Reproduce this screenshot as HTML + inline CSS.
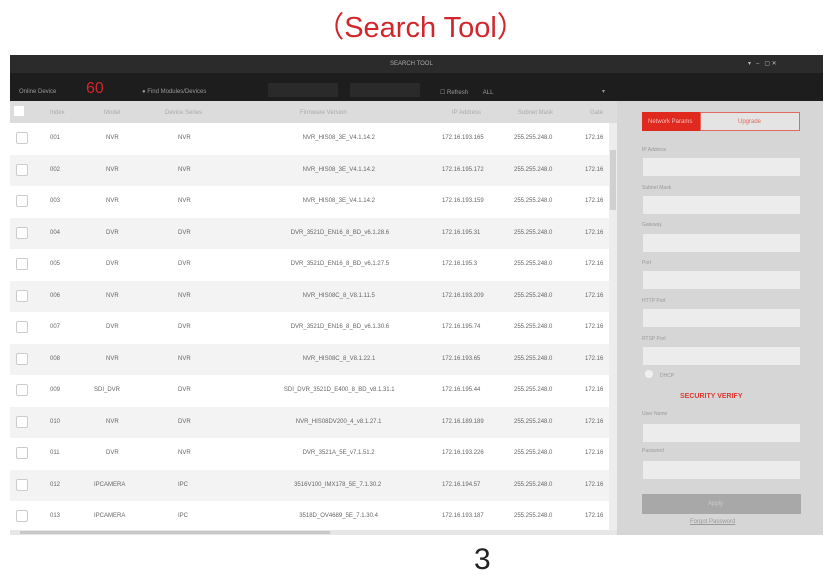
<!DOCTYPE html><html><head><meta charset="utf-8"><style>
body{margin:0;width:833px;height:582px;background:#fff;position:relative;overflow:hidden;font-family:"Liberation Sans",sans-serif}
.a{position:absolute}
.t{font-size:6px;color:#8a8a8a;white-space:nowrap}
.row{position:absolute;left:10px;width:600px;height:31px;font-size:6px;color:#666}
.row span{position:absolute;top:12px;white-space:nowrap}
.cb{position:absolute;left:6px;top:9px;width:10px;height:10px;border:1px solid #ccc;background:#fff;border-radius:2px}
.in{position:absolute;left:643px;width:157px;height:18px;background:#ececec}
.lb{position:absolute;left:642px;font-size:5px;color:#999}
</style></head><body>
<div class="a" style="left:4px;top:4px;width:833px;text-align:center;font-size:29px;color:#d0262c">（Search Tool）</div>
<div class="a" style="left:10px;top:55px;width:813px;height:18px;background:#2b2b2b"></div>
<div class="a t" style="left:390px;top:61px;color:#aaa">SEARCH TOOL</div>
<div class="a t" style="left:748px;top:60px;color:#bbb">▾ &nbsp; – &nbsp; ▢ ✕</div>
<div class="a" style="left:10px;top:73px;width:813px;height:28px;background:#1d1d1d"></div>
<div class="a t" style="left:19px;top:89px;color:#999">Online Device</div>
<div class="a" style="left:86px;top:80px;font-size:16px;color:#d0262c">60</div>
<div class="a t" style="left:142px;top:89px;color:#999">● Find Modules/Devices</div>
<div class="a" style="left:268px;top:83px;width:70px;height:14px;background:#2a2a2a"></div>
<div class="a" style="left:350px;top:83px;width:70px;height:14px;background:#2a2a2a"></div>
<div class="a t" style="left:440px;top:89px;color:#999">☐ Refresh &nbsp; &nbsp; &nbsp; &nbsp; ALL</div>
<div class="a t" style="left:602px;top:88px;color:#999">▾</div>
<div class="a" style="left:10px;top:101px;width:607px;height:22px;background:#dcdcdc"></div>
<div class="a" style="left:14px;top:106px;width:10px;height:10px;background:#fff"></div>
<div class="a t" style="left:50px;top:110px;color:#aaa">Index</div>
<div class="a t" style="left:104px;top:110px;color:#aaa">Model</div>
<div class="a t" style="left:165px;top:110px;color:#aaa">Device Series</div>
<div class="a t" style="left:300px;top:110px;color:#aaa">Firmware Version</div>
<div class="a t" style="left:452px;top:110px;color:#aaa">IP Address</div>
<div class="a t" style="left:518px;top:110px;color:#aaa">Subnet Mask</div>
<div class="a t" style="left:590px;top:110px;color:#aaa">Gate</div>
<div id="rows"></div>
<div class="a" style="left:609px;top:123px;width:8px;height:408px;background:#ededed"></div>
<div class="a" style="left:610px;top:150px;width:6px;height:60px;background:#d0d0d0"></div>
<div class="a" style="left:10px;top:530px;width:607px;height:5px;background:#e6e6e6"></div>
<div class="a" style="left:20px;top:531px;width:310px;height:3px;background:#c8c8c8"></div>
<div class="a" style="left:617px;top:101px;width:206px;height:434px;background:#d6d6d6"></div>
<div class="a" style="left:642px;top:112px;width:58px;height:19px;background:#e02a20"></div>
<div class="a t" style="left:648px;top:119px;color:#f5c0bc">Network Params</div>
<div class="a" style="left:700px;top:112px;width:98px;height:17px;border:1px solid #e06a60;background:#e4e4e4"></div>
<div class="a t" style="left:738px;top:119px;color:#e06a60">Upgrade</div>
<div class="lb" style="top:147px">IP Address</div><div class="in" style="top:158px"></div>
<div class="lb" style="top:185px">Subnet Mask</div><div class="in" style="top:196px"></div>
<div class="lb" style="top:222px">Gateway</div><div class="in" style="top:234px"></div>
<div class="lb" style="top:260px">Port</div><div class="in" style="top:271px"></div>
<div class="lb" style="top:298px">HTTP Port</div><div class="in" style="top:309px"></div>
<div class="lb" style="top:336px">RTSP Port</div><div class="in" style="top:347px"></div>
<div class="a" style="left:645px;top:370px;width:8px;height:8px;border-radius:50%;background:#f0f0f0"></div>
<div class="lb" style="left:660px;top:373px">DHCP</div>
<div class="a" style="left:680px;top:393px;font-size:7px;font-weight:bold;color:#e03a30">SECURITY VERIFY</div>
<div class="lb" style="top:411px">User Name</div><div class="in" style="top:424px"></div>
<div class="lb" style="top:448px">Password</div><div class="in" style="top:461px"></div>
<div class="a" style="left:642px;top:494px;width:159px;height:20px;background:#a8a8a8"></div>
<div class="a t" style="left:708px;top:501px;color:#ccc">Apply</div>
<div class="a t" style="left:690px;top:519px;color:#999;text-decoration:underline">Forgot Password</div>
<div class="a" style="left:474px;top:543px;font-size:30px;color:#222">3</div>
<script>
var d=[["001","NVR","NVR","NVR_HIS08_3E_V4.1.14.2","172.16.193.165","255.255.248.0","172.16"],
["002","NVR","NVR","NVR_HIS08_3E_V4.1.14.2","172.16.195.172","255.255.248.0","172.16"],
["003","NVR","NVR","NVR_HIS08_3E_V4.1.14.2","172.16.193.159","255.255.248.0","172.16"],
["004","DVR","DVR","DVR_3521D_EN16_8_BD_v6.1.28.6","172.16.195.31","255.255.248.0","172.16"],
["005","DVR","DVR","DVR_3521D_EN16_8_BD_v6.1.27.5","172.16.195.3","255.255.248.0","172.16"],
["006","NVR","NVR","NVR_HIS08C_8_V8.1.11.5","172.16.193.209","255.255.248.0","172.16"],
["007","DVR","DVR","DVR_3521D_EN16_8_BD_v6.1.30.6","172.16.195.74","255.255.248.0","172.16"],
["008","NVR","NVR","NVR_HIS08C_8_V8.1.22.1","172.16.193.65","255.255.248.0","172.16"],
["009","SDI_DVR","DVR","SDI_DVR_3521D_E400_8_BD_v8.1.31.1","172.16.195.44","255.255.248.0","172.16"],
["010","NVR","DVR","NVR_HIS08DV200_4_v8.1.27.1","172.16.189.189","255.255.248.0","172.16"],
["011","DVR","NVR","DVR_3521A_5E_v7.1.51.2","172.16.193.226","255.255.248.0","172.16"],
["012","IPCAMERA","IPC","3516V100_IMX178_5E_7.1.30.2","172.16.194.57","255.255.248.0","172.16"],
["013","IPCAMERA","IPC","3518D_OV4689_5E_7.1.30.4","172.16.193.187","255.255.248.0","172.16"]];
var h="";d.forEach(function(r,i){var y=123+i*31.5;h+='<div class="row" style="top:'+y+'px;background:'+(i%2?'#f3f3f3':'#fff')+'"><div class="cb"></div><span style="left:40px">'+r[0]+'</span><span style="left:'+(r[1].length>4?84:96)+'px">'+r[1]+'</span><span style="left:168px">'+r[2]+'</span><span style="left:'+(330-r[3].length*1.7)+'px">'+r[3]+'</span><span style="left:432px">'+r[4]+'</span><span style="left:504px">'+r[5]+'</span><span style="left:575px">'+r[6]+'</span></div>';});
document.getElementById("rows").innerHTML=h;
</script>
</body></html>
